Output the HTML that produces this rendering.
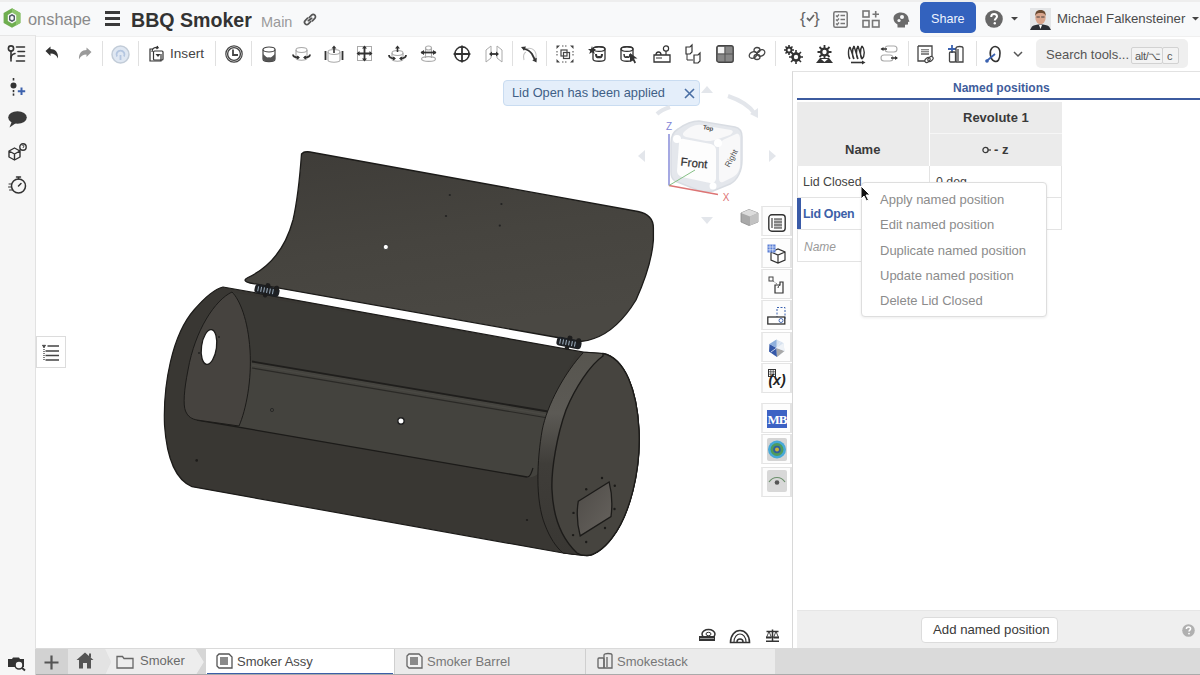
<!DOCTYPE html>
<html><head><meta charset="utf-8">
<style>
*{box-sizing:border-box;margin:0;padding:0}
html,body{width:1200px;height:675px;overflow:hidden;background:#fff;font-family:"Liberation Sans",sans-serif;position:relative}
.a{position:absolute}
.t{position:absolute;white-space:nowrap;line-height:16px}
#top{left:0;top:0;width:1200px;height:37px;background:#f8f9fa;border-bottom:1px solid #f0f0f0}
#side{left:0;top:35px;width:36px;height:640px;background:#f6f6f6;border-right:1px solid #e2e2e2;border-top:1px solid #e6e6e6}
#panel{left:792px;top:71px;width:408px;height:578px;background:#fff;border-left:1px solid #d8d8d8;border-top:1px solid #e2e2e2}
#tabs{left:36px;top:648px;width:1164px;height:27px;background:#dadada}
.sep{position:absolute;top:41px;width:1px;height:25px;background:#e0e0e0}
svg{position:absolute;overflow:visible}
.ic{fill:none;stroke:#333;stroke-width:1.3;stroke-linejoin:round;stroke-linecap:round}
.vb{position:absolute;left:761px;width:31px;height:30px;background:#fdfdfd;border:1px solid #e4e4e4;border-left:2px solid #ebebeb;border-right:2px solid #e3e3e3}
.cm{position:absolute;left:880px;font-size:13px;color:#8c8c8c;white-space:nowrap;line-height:16px}
.cell{position:absolute;border:1px solid #e2e2e2;border-width:0 1px 1px 0}
</style></head><body>
<!-- TOP BAR -->
<div id="top" class="a">
<div class="a" style="left:0;top:0;width:1200px;height:2px;background:#eeeeee"></div>
<svg style="left:3px;top:8px" width="18" height="20" viewBox="0 0 18 20">
<path d="M9 0.3 L17.4 5.1 L17.4 14.9 L9 19.7 L0.6 14.9 L0.6 5.1 Z" fill="#6fae50"/>
<path d="M9 0.3 L17.4 5.1 L17.4 14.9 L13 17.4 L13 7.5 L9 5.2Z" fill="#8cc46c"/>
<path d="M9 4.6 L13.2 7 L13.2 13 L9 15.4 L4.8 13 L4.8 7 Z" fill="#f8f9fa"/>
<path d="M9 6 L12 7.8 L12 12.2 L9 14 L6 12.2 L6 7.8 Z" fill="#505a66"/>
<path d="M9 7.7 L10.6 8.7 L10.6 11.3 L9 12.3 L7.4 11.3 L7.4 8.7 Z" fill="#f8f9fa"/>
</svg>
<div class="t" style="left:28px;top:9px;font-size:16.4px;color:#8a8a8a;line-height:20px">onshape</div>
<div class="a" style="left:105px;top:11px;width:15px;height:3px;background:#3a3a3a"></div>
<div class="a" style="left:105px;top:17px;width:15px;height:3px;background:#3a3a3a"></div>
<div class="a" style="left:105px;top:23px;width:15px;height:3px;background:#3a3a3a"></div>
<div class="t" style="left:131px;top:9px;font-size:19.6px;font-weight:bold;color:#333;line-height:22px">BBQ Smoker</div>
<div class="t" style="left:261px;top:14px;font-size:14.5px;color:#9a9a9a">Main</div>
<svg style="left:303px;top:13px" width="14" height="13" viewBox="0 0 14 13"><g fill="none" stroke="#555" stroke-width="1.7" stroke-linecap="round"><path d="M6.2 4.6 L8.6 2.2 A2.2 2.2 0 0 1 11.8 5.4 L9.4 7.8"/><path d="M7.8 8.4 L5.4 10.8 A2.2 2.2 0 0 1 2.2 7.6 L4.6 5.2"/><path d="M5.3 7.7 L8.7 5.3"/></g></svg>
<!-- right icons -->
<div class="t" style="left:800px;top:9px;font-size:17px;color:#666;line-height:20px;letter-spacing:-1px">{</div>
<div class="t" style="left:814px;top:9px;font-size:17px;color:#666;line-height:20px">}</div>
<svg style="left:806px;top:14px" width="9" height="8"><path d="M1 4 L3.5 6.5 L8 1" fill="none" stroke="#666" stroke-width="1.8"/></svg>
<svg style="left:833px;top:11px" width="15" height="17" viewBox="0 0 15 17"><rect x="0.8" y="0.8" width="13.4" height="15.4" rx="1.5" fill="none" stroke="#777" stroke-width="1.5"/><path d="M3 4.5 L4.2 5.7 L6 3.5 M3 8.5 L4.2 9.7 L6 7.5 M3 12.5 L4.2 13.7 L6 11.5 M7.5 4.5 H12 M7.5 8.5 H12 M7.5 12.5 H12" fill="none" stroke="#777" stroke-width="1.3"/></svg>
<svg style="left:862px;top:10px" width="18" height="18" viewBox="0 0 18 18"><g fill="none" stroke="#777" stroke-width="1.6"><rect x="1" y="1" width="6" height="6"/><rect x="1" y="10.5" width="6" height="6.5"/><rect x="10.5" y="10.5" width="6.5" height="6.5"/><path d="M13.7 1 V7.5 M10.5 4.2 H17"/></g></svg>
<svg style="left:893px;top:12px" width="17" height="16" viewBox="0 0 17 16"><path d="M8 0.5 C12.5 0.5 15.5 3.5 15.5 7.2 L16.5 9.5 L15 10 L15 12.5 L12 12.8 L12 15.5 L4.5 15.5 L4.5 12.5 C2 11 0.5 9 0.5 6.5 C0.5 3 3.5 0.5 8 0.5Z" fill="#6b6b6b"/><circle cx="9" cy="5" r="2" fill="#f7f8f9"/><circle cx="6" cy="8.5" r="1.6" fill="#f7f8f9"/></svg>
<div class="a" style="left:920px;top:2px;width:56px;height:31px;background:#3362be;border-radius:5px"></div>
<div class="t" style="left:931px;top:11px;font-size:12.6px;color:#eef3ff">Share</div>
<svg style="left:985px;top:10px" width="18" height="18" viewBox="0 0 18 18"><circle cx="9" cy="9" r="8.8" fill="#676767"/><path d="M6.2 7 C6.2 4.9 7.6 4 9.1 4 C10.8 4 12 5 12 6.6 C12 8.4 9.8 8.6 9.8 10.4" fill="none" stroke="#fff" stroke-width="2"/><circle cx="9.8" cy="13.3" r="1.2" fill="#fff"/></svg>
<svg style="left:1011px;top:17px" width="8" height="4"><path d="M0 0 H7 L3.5 3.5Z" fill="#444"/></svg>
<svg style="left:1030px;top:8px" width="21" height="22" viewBox="0 0 21 22"><rect width="21" height="22" fill="#e4e6e8"/><path d="M0 22 L2 18.5 C4 17 7 16.5 10.5 16.5 C14 16.5 17 17 19 18.5 L21 22Z" fill="#2b2f36"/><path d="M9 17 L10.5 21 L12 17Z" fill="#fff"/><ellipse cx="10.5" cy="9.5" rx="5.2" ry="6.8" fill="#d9a58c"/><path d="M5.2 8 C5 3.5 7.5 2 10.5 2 C13.5 2 16 3.5 15.8 8 C15 5.5 13 5 10.5 5 C8 5 6 5.5 5.2 8Z" fill="#6a4a32"/><path d="M6.5 9 H9.8 M11.2 9 H14.5" stroke="#333" stroke-width="0.9"/></svg>
<div class="t" style="left:1057px;top:11px;font-size:13.2px;color:#4a4a4a">Michael Falkensteiner</div>
<svg style="left:1192px;top:17px" width="8" height="4"><path d="M0 0 H7 L3.5 3.5Z" fill="#444"/></svg>
</div>

<!-- SIDEBAR -->
<div id="side" class="a"></div>
<svg style="left:7px;top:45px" width="20" height="18" viewBox="0 0 20 18"><g fill="none" stroke="#333" stroke-width="1.6" stroke-linecap="round"><circle cx="4" cy="3.5" r="2.6"/><path d="M4 6.2 V16"/><path d="M4 13 C4 10 6 9 8 8.5"/><path d="M9.5 2 H17.5 M11 6.5 H17.5 M11 11 H17.5 M9.5 16 H17.5"/></g></svg>
<svg style="left:10px;top:78px" width="17" height="18" viewBox="0 0 17 18"><g fill="#333"><rect x="2.7" y="0" width="1.6" height="2.5"/><rect x="2.7" y="12" width="1.6" height="2.2"/><rect x="2.7" y="15.5" width="1.6" height="2.2"/><circle cx="3.5" cy="7.5" r="3"/></g><path d="M11.5 9.5 V17 M7.8 13.2 H15.2" stroke="#3d62ad" stroke-width="2"/></svg>
<svg style="left:8px;top:111px" width="19" height="17" viewBox="0 0 19 17"><ellipse cx="9.5" cy="6.5" rx="9.3" ry="6.2" fill="#3a3a3a"/><path d="M4 10 L1.5 16.5 L8 12Z" fill="#3a3a3a"/></svg>
<svg style="left:8px;top:143px" width="19" height="18" viewBox="0 0 19 18"><g fill="none" stroke="#333" stroke-width="1.4" stroke-linejoin="round"><path d="M1 8 L6.5 5 L12 8 L12 14 L6.5 17 L1 14Z M1 8 L6.5 11 L12 8 M6.5 11 V17"/><circle cx="15" cy="4" r="3.2"/><path d="M12.5 6.5 L10.5 8.5"/></g><path d="M14 2.8 C14 1.8 16 1.8 16 3 C16 4 15 4 15 5" fill="none" stroke="#333" stroke-width="0.9"/></svg>
<svg style="left:8px;top:176px" width="19" height="18" viewBox="0 0 19 18"><g fill="none" stroke="#333" stroke-width="1.5" stroke-linecap="round"><circle cx="10.5" cy="10" r="7"/><path d="M8.5 1 H12.5 M10.5 1 V3 M10.5 10 L13 7.5"/><path d="M1 8 H4 M0.5 11 H3.5 M1.5 14 H4.5" stroke-width="1"/></g></svg>
<div class="a" style="left:36px;top:336px;width:30px;height:32px;background:#fff;border:1px solid #dcdcdc"></div>
<svg style="left:42px;top:344px" width="18" height="18" viewBox="0 0 18 18"><g fill="none" stroke="#444" stroke-width="1.3"><path d="M0.5 1 L2 2.5 L3.5 1" stroke-width="1.6"/><path d="M2 3 V17" stroke-dasharray="1 1"/><path d="M5.5 2 H17 M3.5 7 H17 M3.5 11.5 H17 M3.5 16 H17"/></g></svg>
<svg style="left:8px;top:657px" width="18" height="14" viewBox="0 0 18 14"><path d="M0 2 H4 L5 0.5 H11 L12 2 H16 V10 H0Z" fill="#333"/><circle cx="11" cy="8" r="4" fill="#f5f5f5" stroke="#333" stroke-width="1.6"/><path d="M13.8 10.8 L17 13.5" stroke="#333" stroke-width="2"/></svg>

<!-- TOOLBAR -->
<svg style="left:45px;top:46px" width="14" height="13" viewBox="0 0 14 13"><path d="M0.5 5 L5.5 0.5 L5.5 3 C10 3 13.5 6 13 12.5 C11.5 9 9 7.5 5.5 7.5 L5.5 10 Z" fill="#333"/></svg>
<svg style="left:78px;top:47px" width="14" height="13" viewBox="0 0 14 13"><path d="M13.5 5 L8.5 0.5 L8.5 3 C4 3 0.5 6 1 12.5 C2.5 9 5 7.5 8.5 7.5 L8.5 10 Z" fill="#9a9a9a"/></svg>
<div class="sep" style="left:102px"></div>
<svg style="left:111px;top:45px" width="19" height="19" viewBox="0 0 19 19"><circle cx="9.5" cy="9.5" r="8.5" fill="#dfe7f2" stroke="#c2ccd8" stroke-width="1.5"/><path d="M9.5 15 V10 M6 11.5 A4 4 0 1 1 13 11.5" fill="none" stroke="#b4c6e0" stroke-width="1.8"/></svg>
<div class="sep" style="left:138px"></div>
<svg style="left:149px;top:46px" width="15" height="16" viewBox="0 0 15 16"><g fill="none" stroke="#333" stroke-width="1.2"><path d="M4 3 H1 V15 H12 V8"/><path d="M3 6 C3 2 6 1 9 1.5 L8 0 M9 1.5 L7.5 3"/><rect x="4.5" y="5" width="9.5" height="9" rx="1"/></g><path d="M6.5 8 L11.5 8 L9 11Z" fill="#333"/></svg>
<div class="t" style="left:170px;top:46px;font-size:13.6px;color:#444">Insert</div>
<div class="sep" style="left:215px"></div>
<svg style="left:225px;top:45px" width="18" height="18" viewBox="0 0 18 18"><g fill="none" stroke="#444"><circle cx="9" cy="9" r="8.2" stroke-width="1.2"/><circle cx="9" cy="9" r="6.4" stroke-width="1.4"/><path d="M8 4.5 V10 H13" stroke-width="1.8"/></g></svg>
<div class="sep" style="left:251px"></div>
<!--TB2-->
<svg style="left:259.5px;top:45px" width="19" height="19" viewBox="0 0 19 19"><path d="M3 4.5 V14 C3 17.5 15 17.5 15 14 V4.5" fill="#fff" stroke="#444" stroke-width="1.2"/><path d="M3 9 C5 10 6.5 14 9 12 C11.5 14 13 10 15 9 V14 C15 17.5 3 17.5 3 14Z" fill="#555"/><ellipse cx="9" cy="4.5" rx="6" ry="2.5" fill="#fff" stroke="#444" stroke-width="1.2"/></svg>
<svg style="left:292.2px;top:45px" width="19" height="19" viewBox="0 0 19 19"><ellipse cx="9.5" cy="5" rx="5.5" ry="2.5" fill="none" stroke="#aaa" stroke-width="1.1"/><path d="M4 5 V13 C4 16 15 16 15 13 V5" fill="none" stroke="#aaa" stroke-width="1.1"/><path d="M1 9.5 C1 12 4 12.5 7 12.5 M18 9.5 C18 12 15 12.5 12 12.5" fill="none" stroke="#333" stroke-width="1.8"/><path d="M5 10.5 L8 12.5 L5 14.5Z M14 10.5 L11 12.5 L14 14.5Z" fill="#333"/></svg>
<svg style="left:324.2px;top:45px" width="19" height="19" viewBox="0 0 19 19"><ellipse cx="10" cy="7" rx="6" ry="2.5" fill="none" stroke="#aaa" stroke-width="1.1"/><path d="M4 7 V15 C4 18 16 18 16 15 V7" fill="none" stroke="#aaa" stroke-width="1.1"/><path d="M1.5 6 V15 M18.5 6 V15" stroke="#333" stroke-width="1.8"/><path d="M10 8 V2" stroke="#333" stroke-width="1.6"/><path d="M7.5 3.5 L10 0.5 L12.5 3.5Z" fill="#333"/></svg>
<svg style="left:356.2px;top:45px" width="19" height="19" viewBox="0 0 19 19"><rect x="1.5" y="1.5" width="14" height="14" fill="none" stroke="#aaa" stroke-width="1"/><path d="M8.5 2 V15 M2 8.5 H15" stroke="#333" stroke-width="1.8"/><path d="M6 3.5 L8.5 0.5 L11 3.5Z M6 13.5 L8.5 16.5 L11 13.5Z M3.5 6 L0.5 8.5 L3.5 11Z M13.5 6 L16.5 8.5 L13.5 11Z" fill="#333"/></svg>
<svg style="left:388.0px;top:45px" width="19" height="19" viewBox="0 0 19 19"><ellipse cx="9.5" cy="8" rx="5.5" ry="2.5" fill="none" stroke="#aaa" stroke-width="1.1"/><path d="M4 8 V14 C4 17 15 17 15 14 V8" fill="none" stroke="#aaa" stroke-width="1.1"/><path d="M9.5 7 V2" stroke="#333" stroke-width="1.6"/><path d="M7 3.5 L9.5 0.5 L12 3.5Z" fill="#333"/><path d="M1 10 C1 13 4 13.5 7 13.5 M18 10 C18 13 15 13.5 12 13.5" fill="none" stroke="#333" stroke-width="1.8"/><path d="M5 11.5 L8 13.5 L5 15.5Z M14 11.5 L11 13.5 L14 15.5Z" fill="#333"/></svg>
<svg style="left:420.3px;top:45px" width="19" height="19" viewBox="0 0 19 19"><ellipse cx="8.5" cy="3" rx="3" ry="2" fill="none" stroke="#aaa" stroke-width="1.1"/><path d="M5.5 3 V13 M11.5 3 V13" stroke="#aaa" stroke-width="1.1"/><ellipse cx="8.5" cy="14" rx="7" ry="2.4" fill="none" stroke="#aaa" stroke-width="1.1"/><path d="M1 7.5 H16" stroke="#333" stroke-width="1.8"/><path d="M4 5 L0.5 7.5 L4 10Z M13 5 L16.5 7.5 L13 10Z" fill="#333"/></svg>
<svg style="left:452.5px;top:45px" width="19" height="19" viewBox="0 0 19 19"><circle cx="9" cy="9" r="7.2" fill="none" stroke="#333" stroke-width="1.4"/><path d="M9 1 V17 M1 9 H17" stroke="#333" stroke-width="1.8"/><path d="M6.5 3 L9 0 L11.5 3Z M6.5 15 L9 18 L11.5 15Z M3 6.5 L0 9 L3 11.5Z M15 6.5 L18 9 L15 11.5Z" fill="#333"/></svg>
<svg style="left:484.5px;top:45px" width="19" height="19" viewBox="0 0 19 19"><path d="M1 5 L6 1 V13 L1 17Z M17 5 L12 1 V13 L17 17Z" fill="none" stroke="#aaa" stroke-width="1"/><path d="M5 9 H13" stroke="#333" stroke-width="1.8"/><path d="M7 6.5 L4 9 L7 11.5Z M11 6.5 L14 9 L11 11.5Z" fill="#333"/></svg>
<svg style="left:519.8px;top:45px" width="19" height="19" viewBox="0 0 19 19"><path d="M6 4 C10 2 15 4 16 9 C16.5 12 15 15 13 16" fill="none" stroke="#c4c4c4" stroke-width="1.1"/><path d="M4 15 C3 11 4 8 6 7" fill="none" stroke="#c4c4c4" stroke-width="1.1"/><path d="M3.5 3.5 C7 4.5 10 6 12 9 C13 11 14 13 15 15" fill="none" stroke="#333" stroke-width="1.8"/><path d="M1 2 L6 1.5 L4 5.8Z M16.5 17.5 L12.3 15.2 L16.8 12.8Z" fill="#333"/></svg>
<svg style="left:556.0px;top:45px" width="19" height="19" viewBox="0 0 19 19"><g fill="#444"><path d="M0.5 0.5 H4 L0.5 4Z M17.5 0.5 H14 L17.5 4Z M0.5 17.5 H4 L0.5 14Z M17.5 17.5 H14 L17.5 14Z"/></g><path d="M6 1 H12 M6 17 H12 M1 6 V12 M17 6 V12" stroke="#555" stroke-width="1.1" stroke-dasharray="1.5 1.5"/><rect x="5" y="5" width="6" height="6" fill="#fff" stroke="#444" stroke-width="1.2"/><rect x="7.5" y="7.5" width="6" height="6" fill="none" stroke="#444" stroke-width="1.2"/></svg>
<svg style="left:588.3px;top:45px" width="19" height="19" viewBox="0 0 19 19"><path d="M5 4 C5 1 17 1 17 4 V14 C17 17 5 17 5 14Z" fill="none" stroke="#333" stroke-width="1.3"/><ellipse cx="11" cy="4" rx="6" ry="2.4" fill="none" stroke="#333" stroke-width="1.2"/><path d="M8 9 C8 13 11 13 11 11 C11 13 14 13 14 9" fill="none" stroke="#333" stroke-width="2"/><path d="M4 1 L5 4 L8 4 L5.8 6 L6.8 9 L4 7.2 L1.2 9 L2.2 6 L0 4 L3 4Z" fill="#333"/></svg>
<svg style="left:619.8px;top:45px" width="19" height="19" viewBox="0 0 19 19"><path d="M1 4 C1 1 13 1 13 4 V14 C13 17 1 17 1 14Z" fill="none" stroke="#333" stroke-width="1.3"/><ellipse cx="7" cy="4" rx="6" ry="2.4" fill="none" stroke="#333" stroke-width="1.2"/><path d="M4 9 C4 13 7 13 7 11 C7 13 10 13 10 9" fill="none" stroke="#333" stroke-width="1.5"/><path d="M10 8 L10 17 L12.5 14.5 L14.5 18.5 L16 17.5 L14 13.5 L17.5 13.5Z" fill="#333"/></svg>
<svg style="left:652.5px;top:45px" width="19" height="19" viewBox="0 0 19 19"><circle cx="13" cy="3.5" r="2.6" fill="none" stroke="#333" stroke-width="1.2"/><path d="M13 6 V10" stroke="#333" stroke-width="1.2"/><path d="M1 10 H17 V17 H1Z" fill="none" stroke="#333" stroke-width="1.3"/><path d="M3 10 C3 6 8 6 8 10" fill="none" stroke="#333" stroke-width="1.3"/><path d="M3 13 H9" stroke="#333" stroke-width="1"/></svg>
<svg style="left:684.2px;top:45px" width="19" height="19" viewBox="0 0 19 19"><path d="M2 2 H6 L8 0 V7 L6 9 H2Z" fill="none" stroke="#333" stroke-width="1.2"/><path d="M10 10 H14 L16 8 V16 L14 18 H10Z" fill="none" stroke="#333" stroke-width="1.2"/><path d="M3 9 V15 H9" fill="none" stroke="#333" stroke-width="1"/></svg>
<svg style="left:716.0px;top:45px" width="19" height="19" viewBox="0 0 19 19"><rect x="0.8" y="0.8" width="16.4" height="16.4" rx="2" fill="#888" stroke="#444" stroke-width="1.4"/><rect x="2" y="2" width="6.5" height="6.5" fill="#f3f3f3"/><path d="M9 1 V17 M1 9 H17" stroke="#555" stroke-width="1"/></svg>
<svg style="left:748.3px;top:45px" width="19" height="19" viewBox="0 0 19 19"><g fill="none" stroke="#444" stroke-width="1.3"><ellipse cx="5" cy="10" rx="4" ry="3" transform="rotate(-30 5 10)"/><ellipse cx="13" cy="8" rx="4" ry="3" transform="rotate(-30 13 8)"/><ellipse cx="9" cy="5" rx="3" ry="2.5"/><ellipse cx="9" cy="12" rx="3" ry="2.5"/></g></svg>
<svg style="left:784.2px;top:45px" width="19" height="19" viewBox="0 0 19 19"><g fill="#333"><circle cx="5" cy="5" r="3.4"/><circle cx="12" cy="12" r="4.8"/></g><g stroke="#333" stroke-width="1.6"><path d="M5 0 V10 M0 5 H10 M1.5 1.5 L8.5 8.5 M8.5 1.5 L1.5 8.5"/><path d="M12 5 V19 M5 12 H19 M7 7 L17 17 M17 7 L7 17"/></g><circle cx="5" cy="5" r="1.5" fill="#fff"/><circle cx="12" cy="12" r="2.2" fill="#fff"/></svg>
<svg style="left:815.9px;top:45px" width="19" height="19" viewBox="0 0 19 19"><circle cx="8.5" cy="7" r="4.5" fill="#333"/><g stroke="#333" stroke-width="1.8"><path d="M8.5 0 V14 M1.5 7 H15.5 M3.5 2 L13.5 12 M13.5 2 L3.5 12"/></g><circle cx="8.5" cy="7" r="2.2" fill="#fff"/><path d="M0 18 L4 13 H13 L17 18Z" fill="#333"/><path d="M5 14 L8.5 17 L12 14" fill="#fff"/></svg>
<svg style="left:848.3px;top:45px" width="19" height="19" viewBox="0 0 19 19"><g fill="none" stroke="#333" stroke-width="1.4"><path d="M2 2 C0 4 0 12 2 14 M6 1 C4 4 4 12 6 14 M10 1 C8 4 8 12 10 14 M14 1 C12 4 12 12 14 14 M2 2 L6 14 M6 1 L10 14 M10 1 L14 14 M14 1 C17 4 17 11 14 14"/></g><path d="M3 17.5 H15" stroke="#333" stroke-width="1.6"/><path d="M14 15.5 L17.5 17.5 L14 19.5Z" fill="#333"/></svg>
<svg style="left:880.0px;top:45px" width="19" height="19" viewBox="0 0 19 19"><rect x="5" y="1" width="12" height="6" rx="3" fill="none" stroke="#aaa" stroke-width="1.1"/><rect x="1" y="10" width="12" height="6" rx="3" fill="none" stroke="#aaa" stroke-width="1.1"/><path d="M1.5 4 H7 M11 13 H17" stroke="#333" stroke-width="1.6"/><path d="M3.5 2 L0.5 4 L3.5 6Z M15 11 L18 13 L15 15Z" fill="#333"/></svg>
<svg style="left:916.9px;top:45px" width="19" height="19" viewBox="0 0 19 19"><path d="M1 1 H15 V11 M1 1 V16 H8" fill="none" stroke="#444" stroke-width="1.3"/><rect x="4" y="4" width="8" height="6" fill="#888"/><path d="M4 5.5 H12 M4 7.5 H12" stroke="#fff" stroke-width="0.6"/><g fill="none" stroke="#444" stroke-width="1.1"><ellipse cx="10.5" cy="15" rx="3" ry="2" transform="rotate(-40 10.5 15)"/><ellipse cx="13.5" cy="14" rx="3" ry="2" transform="rotate(-40 13.5 14)"/></g></svg>
<svg style="left:947.7px;top:45px" width="19" height="19" viewBox="0 0 19 19"><path d="M4 0 V8 M0 4 H8" stroke="#3b62b0" stroke-width="1.8"/><g fill="none" stroke="#444" stroke-width="1.3"><rect x="1.5" y="7" width="6" height="10" rx="1"/><path d="M8 17 V3 C8 1 15 1 15 3 V17Z"/><path d="M10 4 V16"/></g></svg>
<svg style="left:984.5px;top:45px" width="19" height="19" viewBox="0 0 19 19"><path d="M15 8 C15 2 10 0 7 3 C4 6 5 14 9 16 C13 18 15 14 15 8Z" fill="none" stroke="#333" stroke-width="1.6"/><path d="M1 16.5 L10 9" stroke="#3b62b0" stroke-width="1.8"/><circle cx="2" cy="16" r="1.8" fill="#3b62b0"/></svg>
<div class="sep" style="left:512px"></div>
<div class="sep" style="left:546px"></div>
<div class="sep" style="left:775px"></div>
<div class="sep" style="left:908px"></div>
<div class="sep" style="left:976px"></div>
<svg style="left:1013px;top:51px" width="10" height="6"><path d="M1 1 L5 5 L9 1" fill="none" stroke="#555" stroke-width="1.5"/></svg>
<div class="a" style="left:1036px;top:39px;width:152px;height:29px;background:#efefef;border-radius:5px"></div>
<div class="t" style="left:1046px;top:47px;font-size:13px;color:#555">Search tools...</div>
<div class="a" style="left:1131px;top:47px;width:32px;height:17px;border:1px solid #d2d2d2;border-radius:2px;background:#f3f3f3"></div>
<div class="a" style="left:1162px;top:47px;width:17px;height:17px;border:1px solid #d2d2d2;border-radius:2px;background:#f3f3f3"></div>
<div class="t" style="left:1135px;top:48px;font-size:11px;color:#555;letter-spacing:-0.3px">alt/&#8997;</div>
<div class="t" style="left:1167px;top:48px;font-size:11px;color:#555">c</div>
<!--/TB2-->
<!-- MODEL -->
<svg style="left:0;top:0" width="1200" height="675" viewBox="0 0 1200 675">
<defs>
<linearGradient id="lidg" x1="0" y1="0" x2="0.3" y2="1"><stop offset="0" stop-color="#3e3c38"/><stop offset="0.55" stop-color="#46443f"/><stop offset="1" stop-color="#4a4843"/></linearGradient>
<linearGradient id="rimg" x1="0" y1="0" x2="0" y2="1"><stop offset="0" stop-color="#57554f"/><stop offset="0.3" stop-color="#5c5a55"/><stop offset="0.55" stop-color="#3f3d39"/><stop offset="1" stop-color="#393733"/></linearGradient>
<linearGradient id="ventg" x1="0" y1="0" x2="1" y2="1"><stop offset="0" stop-color="#4e4b47"/><stop offset="1" stop-color="#67635e"/></linearGradient>
</defs>
<!-- barrel exterior -->
<path d="M223 287 L583.7 352.2 L603 353.5 C625 358 637 390 639 430 C641 470 630 515 612 538 C603 550 593 556 586 555.5 C578 555 570 554 563 553 L192 486.7 C178 481 167 462 164.5 425 C163 385 172 335 194 310 C206 296 215 289 223 287Z" fill="#393733" stroke="#1c1b19" stroke-width="1.2"/>
<!-- interior back wall -->
<path d="M232 292 L578 352 C566 370 552 400 545 440 L540 470 C538 476 532 478 527 477 L197 420 C190 418 186 414 185.5 411 C184 380 192 335 205 318 C215 303 225 294 232 292Z" fill="#3a3935"/>
<!-- interior floor -->
<path d="M250 362 L547 412 L540 470 C538 476 532 478 527 477 L238 427 Z" fill="#44433e"/>
<!-- groove -->
<path d="M252 361.5 L548 411.5" stroke="#1f1e1c" stroke-width="1.8" fill="none"/>
<path d="M252 368 L548 418" stroke="#2a2926" stroke-width="1.2" fill="none"/>
<path d="M252 365 L548 415" stroke="#4a4944" stroke-width="1.4" fill="none"/>
<!-- lip -->
<path d="M197 420 L527 477" stroke="#1c1b19" stroke-width="1.3" fill="none"/>
<path d="M533 468 C531 474 530 477 527 477" stroke="#1c1b19" stroke-width="1.2" fill="none"/>
<!-- left inner cap face -->
<path d="M232 292 C215 300 195 330 188 370 C184 390 183 405 185.5 411 C188 417 192 419 197 420 L239 426 C246 410 252 380 250 350 C248 320 240 300 232 292Z" fill="#46433f" stroke="#1c1b19" stroke-width="1"/>
<ellipse cx="209" cy="347" rx="7.5" ry="17.5" transform="rotate(8 209 347)" fill="#fff" stroke="#1c1b19" stroke-width="1.3"/>
<circle cx="219" cy="337" r="1" fill="#222"/><circle cx="199" cy="353" r="1" fill="#222"/>
<!-- right cap rim -->
<path d="M583.7 352.2 C565 372 547 405 542.2 430 C537 460 535 500 545 525 C550 538 556 547 563 553 C570 554 578 555 586 555.5 C593 556 603 550 612 538 C630 515 641 470 639 430 C637 390 625 358 603 353.5 Z" fill="url(#rimg)" stroke="#1c1b19" stroke-width="1"/>
<!-- right cap face -->
<path d="M603 353.5 C625 358 637 390 639 430 C641 470 630 515 612 538 C603 550 593 556 586 555.5 C582 555.5 579 554.5 577 553 C560 537 553 515 552 490 C551 470 557 435 566 410 C575 388 590 365 603 356Z" fill="#46443f" stroke="#1c1b19" stroke-width="1.4"/>
<!-- vent -->
<path d="M578.3 501.2 L609.1 481.9 C612 493 612.5 505 611 516.6 L580.2 535.9 C577 524 576.5 512 578.3 501.2Z" fill="url(#ventg)" stroke="#1c1b19" stroke-width="1.3"/>
<g fill="#1c1b19"><circle cx="602" cy="478" r="1.2"/><circle cx="614.8" cy="485.7" r="1.2"/><circle cx="614.5" cy="509" r="1.2"/><circle cx="605" cy="528" r="1.2"/><circle cx="586.2" cy="542" r="1.2"/><circle cx="573.1" cy="535.1" r="1.2"/><circle cx="573.5" cy="512.9" r="1.2"/><circle cx="586.2" cy="489.3" r="1.2"/>
<circle cx="196.7" cy="460.4" r="1.3"/><circle cx="527" cy="520" r="1.1"/><circle cx="272" cy="410" r="1.6" fill="none" stroke="#222" stroke-width="0.8"/></g>
<circle cx="401" cy="421" r="3.2" fill="#fff" stroke="#222" stroke-width="1.4"/>
<!-- lid -->
<path d="M301.5 154 C304 151 307 151.5 310 152 L638 211.5 C648 213.5 653.4 218 653.4 228 L653.4 240 C652 260 645 280 636 300 C625 318 610 333 594 338.5 C589 340.5 585 341.5 580 341.5 L250 283 C245 282 243 280 248 277.5 C268 268 285 250 293 220 C298 198 300 175 301.5 154Z" fill="url(#lidg)" stroke="#1c1b19" stroke-width="1.3"/>
<circle cx="385.8" cy="247" r="2.6" fill="#fff" stroke="#222" stroke-width="0.8"/>
<g fill="#222"><circle cx="449.8" cy="195" r="1.1"/><circle cx="501.4" cy="204" r="1.1"/><circle cx="446" cy="216" r="1.1"/><circle cx="499.8" cy="225.6" r="1.1"/></g>
<!-- hinges -->
<g transform="translate(267 290.5) rotate(11)"><rect x="-12.5" y="-4.5" width="25" height="9" rx="3" fill="#1d2024"/><path d="M-9 -2.5 V2.5 M-6 -2.5 V2.5 M-3 -2.5 V2.5 M0 -2.5 V2.5 M3 -2.5 V2.5 M6 -2.5 V2.5" stroke="#93a3b2" stroke-width="1.1"/><circle cx="0" cy="-5" r="2.5" fill="#1d1d1d"/><circle cx="9" cy="-4" r="2.5" fill="#1d1d1d"/><circle cx="-1" cy="5" r="2.2" fill="#1d1d1d"/></g>
<g transform="translate(569 343) rotate(11)"><rect x="-12.5" y="-4.5" width="25" height="9" rx="3" fill="#1d2024"/><path d="M-9 -2.5 V2.5 M-6 -2.5 V2.5 M-3 -2.5 V2.5 M0 -2.5 V2.5 M3 -2.5 V2.5 M6 -2.5 V2.5" stroke="#93a3b2" stroke-width="1.1"/><circle cx="0" cy="-5" r="2.5" fill="#1d1d1d"/><circle cx="9" cy="-4" r="2.5" fill="#1d1d1d"/><circle cx="-1" cy="5" r="2.2" fill="#1d1d1d"/></g>
</svg>

<!-- VIEW OVERLAYS -->
<div class="a" style="left:503px;top:80px;width:197px;height:26px;background:#e4eefa;border:1px solid #c9dcf1;border-radius:4px"></div>
<div class="t" style="left:512px;top:85px;font-size:12.8px;color:#3f5f86">Lid Open has been applied</div>
<svg style="left:684px;top:88px" width="11" height="11"><path d="M1 1 L10 10 M10 1 L1 10" stroke="#4a6fa5" stroke-width="1.6"/></svg>
<svg style="left:0;top:0" width="1200" height="675" viewBox="0 0 1200 675">
<g fill="#e3e6eb"><path d="M701 93 L707 86 L713 93Z"/><path d="M645 150 L638 156 L645 162Z"/><path d="M769 150 L776 156 L769 162Z"/><path d="M701 217 L707 224 L713 217Z"/></g>
<path d="M728 96 C740 100 750 106 755 114" fill="none" stroke="#e3e6eb" stroke-width="4"/>
<path d="M750 114 L758 118 L758 108Z" fill="#e3e6eb"/>
<path d="M670 107 C664 109 660 111 657 114" fill="none" stroke="#e3e6eb" stroke-width="4"/>
<!-- cube -->
<path d="M678 129 C685 124 692 121 699 121 L735 127 C740 128 742 132 742 137 L742 160 C742 170 738 180 730 184 L713 191 C708 192 704 192 700 191 L675 181 C672 179 671 176 671 172 L671 143 C671 137 673 132 678 129Z" fill="#e4e7ec" stroke="#d9dde3" stroke-width="1.5"/>
<path d="M679 143 C679 140 681 138 684 139 L711 144 C714 145 716 147 716 150 L716 178 C716 182 713 184 710 183 L682 177 C679 176 677 174 677 171Z" fill="#fdfdfd"/>
<path d="M719 147 C719 144 722 140 725 139 L736 134 C739 133 740 136 740 139 L740 165 C740 170 737 175 733 177 L723 182 C720 183 719 181 719 178Z" fill="#f8f8f9"/>
<path d="M684 132 C689 127 696 124 701 125 L731 130 C734 131 733 133 730 135 L715 140 C712 141 709 141 706 141 L686 137 C683 136 682 134 684 132Z" fill="#f8f8f9"/>
<circle cx="677" cy="139" r="4" fill="#fff"/><circle cx="718" cy="143" r="4" fill="#fff"/><circle cx="713" cy="186" r="3.5" fill="#fff"/>
<text x="694" y="167" font-family="Liberation Sans" font-size="11.5" fill="#333" stroke="#333" stroke-width="0.25" text-anchor="middle" transform="rotate(6 694 164)">Front</text>
<text x="731" y="161" font-family="Liberation Sans" font-size="8" fill="#555" text-anchor="middle" transform="rotate(-62 731 158)">Right</text>
<text x="708" y="130" font-family="Liberation Sans" font-size="6" font-weight="bold" fill="#444" text-anchor="middle" transform="rotate(12 708 129)">Top</text>
<!-- axes -->
<path d="M669 185.5 V134" stroke="#7f84d6" stroke-width="1.4"/>
<path d="M669 185.5 L718 194.5" stroke="#dd7474" stroke-width="1.4"/>
<path d="M669 185.5 L695 170" stroke="#86c086" stroke-width="1"/>
<text x="669" y="130" font-family="Liberation Sans" font-size="10" fill="#7f84d6" text-anchor="middle">Z</text>
<text x="726" y="201" font-family="Liberation Sans" font-size="10" fill="#dd7474" text-anchor="middle">X</text>
<!-- small 3d cube -->
<path d="M741 213 L749 209.5 L758 213 L758 222 L749 225.5 L741 222Z" fill="#a9a9a9" stroke="#8c8c8c" stroke-width="0.8"/>
<path d="M741 213 L749 209.5 L758 213 L750 216.5Z" fill="#dcdcdc"/>
<path d="M750 216.5 L758 213 L758 222 L750 225.5Z" fill="#c2c2c2"/>
<!-- measure icons -->
<g transform="translate(698.5 629.5)"><ellipse cx="10" cy="4.5" rx="6.5" ry="4.5" fill="none" stroke="#333" stroke-width="1.5"/><ellipse cx="10" cy="4.5" rx="2.5" ry="1.7" fill="none" stroke="#333" stroke-width="1"/><rect x="0.5" y="6.5" width="16" height="5" fill="#333"/><path d="M2 9 H15" stroke="#fff" stroke-width="1" stroke-dasharray="1 1"/></g>
<g transform="translate(730 630)"><path d="M0.5 12.5 C0.5 5 5 0.5 10 0.5 C15 0.5 19.5 5 19.5 12.5Z" fill="none" stroke="#333" stroke-width="1.6"/><path d="M4 12 C4 7 7 4 10 4 C13 4 16 7 16 12" fill="none" stroke="#333" stroke-width="1.1"/><path d="M7 12 C7 10 8.5 9 10 9 C11.5 9 13 10 13 12" fill="none" stroke="#333" stroke-width="1.5"/></g>
<g transform="translate(765.5 628.5)"><path d="M1 3 H13 M7 1 V12 M0.5 12.8 H13.5" stroke="#333" stroke-width="1.5"/><path d="M3.5 3 L1 9 H6Z M10.5 3 L8 9 H13Z" fill="none" stroke="#333" stroke-width="0.9"/><path d="M0.5 9 H6 M8 9 H13.5" stroke="#333" stroke-width="1.8"/></g>
</svg>
<!-- right vertical toolbar -->
<div class="vb" style="top:206px"></div>
<div class="vb" style="top:238px"></div>
<div class="vb" style="top:269px"></div>
<div class="vb" style="top:300px"></div>
<div class="vb" style="top:332px"></div>
<div class="vb" style="top:363px"></div>
<div class="vb" style="top:403px"></div>
<div class="vb" style="top:434px"></div>
<div class="vb" style="top:467px"></div>
<svg style="left:0;top:0" width="1200" height="675" viewBox="0 0 1200 675">
<g transform="translate(768 214)"><rect x="0.8" y="0.8" width="16.4" height="16.4" rx="3" fill="none" stroke="#333" stroke-width="1.4"/><path d="M4 4 V14 M6 5 H14 M6 8 H14 M6 11 H14 M6 14 H14" stroke="#333" stroke-width="1.1"/><rect x="6" y="5" width="8" height="9" fill="#666" opacity="0.4"/></g>
<g transform="translate(767 244)"><path d="M4 8 L11 5 L18 8 L18 16 L11 19 L4 16Z M4 8 L11 11 L18 8 M11 11 V19" fill="#fff" stroke="#333" stroke-width="1.2"/><rect x="0.5" y="0.5" width="8" height="8" fill="#5a7fd6"/><path d="M3 0.5 V8.5 M5.8 0.5 V8.5 M0.5 3 H8.5 M0.5 5.8 H8.5" stroke="#fff" stroke-width="0.6"/></g>
<g transform="translate(768 276)"><rect x="1" y="1" width="4" height="4" fill="none" stroke="#444" stroke-width="1"/><path d="M5 5 L9 8" stroke="#444" stroke-width="0.8" stroke-dasharray="1 1"/><path d="M7 9 H12 V6 L15 6 V17 H7Z" fill="none" stroke="#333" stroke-width="1.2"/><path d="M10 12 C10 10 12 9 12 9" fill="none" stroke="#333" stroke-width="1"/></g>
<g transform="translate(767 307)"><rect x="10" y="0.5" width="8" height="13" fill="none" stroke="#3b62b0" stroke-width="1" stroke-dasharray="2 1.5"/><rect x="0.8" y="10" width="17" height="7" fill="#fff" stroke="#333" stroke-width="1.3"/><circle cx="14" cy="13.5" r="2" fill="none" stroke="#3b62b0" stroke-width="0.9"/></g>
<g transform="translate(768 339)"><path d="M8.5 0.5 L15.5 4 L16.5 12 L9 18 L1 12.5 L1.5 5Z" fill="#d7e2ef"/><path d="M1.5 5 L8.5 9 L9 18 L1 12.5Z" fill="#3558a8"/><path d="M8.5 0.5 L8.5 9 L1.5 5Z" fill="#8fb0dd"/><path d="M8.5 9 L16.5 12 L9 18Z" fill="#a9a9a9"/><path d="M8.5 9 L15.5 4 L16.5 12Z" fill="#eef2f7"/><path d="M3 13 L8.5 9 L13 2" stroke="#e8eef8" stroke-width="0.8" fill="none"/></g>
<g transform="translate(766 368)"><rect x="2.5" y="1.5" width="7" height="7" fill="#fff" stroke="#333" stroke-width="1"/><path d="M2.5 3.8 H9.5 M2.5 6.2 H9.5 M4.8 1.5 V8.5 M7.2 1.5 V8.5" stroke="#333" stroke-width="0.7"/><text x="11" y="17" font-family="Liberation Sans" font-size="14" font-weight="bold" font-style="italic" fill="#222" text-anchor="middle">(x)</text></g>
<g transform="translate(767 410)"><rect x="0" y="0" width="20" height="18" fill="#3d62c4"/><text x="10" y="14" font-family="Liberation Serif" font-size="13" font-weight="bold" fill="#fff" text-anchor="middle" letter-spacing="-1">MB</text></g>
<g transform="translate(767 438)"><rect x="0" y="0" width="20" height="23" rx="2" fill="#d4d4d4"/><circle cx="10" cy="11.5" r="9" fill="#47a9d8"/><circle cx="10" cy="11.5" r="6.5" fill="#4e9a5c"/><circle cx="10" cy="11.5" r="3.8" fill="#2e5f9e"/><circle cx="10" cy="11.5" r="2" fill="#c9b33a"/></g>
<g transform="translate(767 470)"><rect x="0" y="0" width="20" height="22" rx="2" fill="#d8d8d8"/><path d="M2 12 C6 6 14 6 18 12" fill="none" stroke="#6b8f6b" stroke-width="1.2"/><circle cx="10" cy="12.5" r="2.3" fill="#555"/></g>
</svg>

<!-- PANEL -->
<div id="panel" class="a"></div>
<div class="t" style="left:953px;top:80px;font-size:12px;font-weight:bold;color:#3f5d9c">Named positions</div>
<div class="a" style="left:797px;top:98px;width:403px;height:2px;background:#3c5b9f"></div>
<div class="a" style="left:797px;top:102px;width:265px;height:64px;background:#ebebeb"></div>
<div class="a" style="left:929px;top:102px;width:1px;height:64px;background:#fff"></div>
<div class="a" style="left:930px;top:133px;width:132px;height:1px;background:#f6f6f6"></div>
<div class="t" style="left:845px;top:142px;font-size:13px;font-weight:bold;color:#3a3a3a">Name</div>
<div class="t" style="left:963px;top:110px;font-size:13px;font-weight:bold;color:#3a3a3a">Revolute 1</div>
<svg style="left:982px;top:146px" width="10" height="8"><circle cx="3.5" cy="4" r="2.6" fill="none" stroke="#3a3a3a" stroke-width="1.3"/><path d="M6 4 H9" stroke="#3a3a3a" stroke-width="1.3"/></svg>
<div class="t" style="left:994px;top:142px;font-size:13px;font-weight:bold;color:#3a3a3a">- z</div>
<!-- rows -->
<div class="a" style="left:797px;top:166px;width:265px;height:64px;border-left:1px solid #e3e3e3;border-right:1px solid #e3e3e3"></div>
<div class="a" style="left:797px;top:197px;width:265px;height:1px;background:#e3e3e3"></div>
<div class="a" style="left:797px;top:229px;width:265px;height:1px;background:#e3e3e3"></div>
<div class="a" style="left:929px;top:166px;width:1px;height:64px;background:#e3e3e3"></div>
<div class="a" style="left:797px;top:230px;width:1px;height:32px;background:#e3e3e3"></div>
<div class="a" style="left:797px;top:261px;width:70px;height:1px;background:#e3e3e3"></div>
<div class="a" style="left:797px;top:198px;width:4px;height:31px;background:#3a5ba8"></div>
<div class="t" style="left:803px;top:174px;font-size:12.4px;color:#444">Lid Closed</div>
<div class="t" style="left:936px;top:174px;font-size:12.4px;color:#444">0 deg</div>
<div class="t" style="left:803px;top:206px;font-size:12.4px;font-weight:bold;color:#3d5fa8;letter-spacing:-0.3px">Lid Open</div>
<div class="t" style="left:804px;top:239px;font-size:12px;font-style:italic;color:#9a9a9a">Name</div>
<!-- context menu -->
<div class="a" style="left:861px;top:182px;width:186px;height:135px;background:#fff;border:1px solid #dedede;border-radius:4px;box-shadow:0 1px 3px rgba(0,0,0,0.08)"></div>
<div class="cm" style="top:192px">Apply named position</div>
<div class="cm" style="top:217px">Edit named position</div>
<div class="cm" style="top:243px">Duplicate named position</div>
<div class="cm" style="top:268px">Update named position</div>
<div class="cm" style="top:293px">Delete Lid Closed</div>
<svg style="left:860px;top:185px" width="12" height="17" viewBox="0 0 12 17"><path d="M1 1 V14 L4 11 L6.5 16 L8.5 15 L6 10 L10 10Z" fill="#111" stroke="#fff" stroke-width="1"/></svg>
<!-- footer -->
<div class="a" style="left:797px;top:610px;width:403px;height:38px;background:#efefef;border-top:1px solid #e6e6e6"></div>
<div class="a" style="left:921px;top:617px;width:137px;height:26px;background:#fff;border:1px solid #dcdcdc;border-radius:4px"></div>
<div class="t" style="left:933px;top:622px;font-size:13.2px;color:#3a3a3a">Add named position</div>
<svg style="left:1182px;top:624px" width="13" height="13" viewBox="0 0 13 13"><circle cx="6.5" cy="6.5" r="6.3" fill="#b0b0b0"/><path d="M4.4 5 C4.4 3.6 5.4 3 6.5 3 C7.7 3 8.6 3.7 8.6 4.8 C8.6 6.1 7 6.2 7 7.5" fill="none" stroke="#fff" stroke-width="1.5"/><circle cx="7" cy="9.6" r="0.9" fill="#fff"/></svg>
<!-- TABS -->
<div id="tabs" class="a"></div>
<div class="a" style="left:35px;top:649px;width:33px;height:26px;background:#d2d2d2"></div>
<svg style="left:44px;top:655px" width="15" height="15"><path d="M7.5 0.5 V14.5 M0.5 7.5 H14.5" stroke="#555" stroke-width="2.2"/></svg>
<svg style="left:68px;top:649px" width="140" height="26" viewBox="0 0 140 26"><path d="M0 0 H37 L43 13 L37 26 H0Z" fill="#e3e3e3"/><path d="M37 0 H128 L136 13 L128 26 H37 L43 13Z" fill="#ededed"/><path d="M128 0 H138 V26 H128 L136 13Z" fill="#d6d6d6"/></svg>
<svg style="left:76px;top:652px" width="18" height="17" viewBox="0 0 18 17"><path d="M9 0.5 L17.5 8 H15 V16.5 H11 V11 H7 V16.5 H3 V8 H0.5Z" fill="#555"/><rect x="13" y="1.5" width="2" height="4" fill="#555"/></svg>
<svg style="left:116px;top:655px" width="18" height="14" viewBox="0 0 18 14"><path d="M1 1.5 H6.5 L8 3.5 H17 V13 H1Z" fill="none" stroke="#666" stroke-width="1.3"/></svg>
<div class="t" style="left:140px;top:653px;font-size:13px;color:#6a6a6a">Smoker</div>
<div class="a" style="left:206px;top:649px;width:188px;height:26px;background:#fff"></div>
<div class="a" style="left:207px;top:673px;width:186px;height:2px;background:#3c5fa8"></div>
<svg style="left:216px;top:653px" width="17" height="16" viewBox="0 0 17 16"><path d="M1 3 L3 1 H13 L16 4 V15 H3 L1 13Z" fill="#fff" stroke="#555" stroke-width="1.3"/><rect x="4" y="4" width="8" height="8" fill="#8a8a8a"/></svg>
<div class="t" style="left:237px;top:654px;font-size:13px;color:#4a4a4a">Smoker Assy</div>
<div class="a" style="left:394px;top:649px;width:191px;height:26px;background:#ebebeb;border-left:1px solid #cfcfcf"></div>
<svg style="left:406px;top:653px" width="17" height="16" viewBox="0 0 17 16"><path d="M1 3 L3 1 H13 L16 4 V15 H3 L1 13Z" fill="#f2f2f2" stroke="#666" stroke-width="1.3"/><rect x="4" y="4" width="8" height="8" fill="#8a8a8a"/></svg>
<div class="t" style="left:427px;top:654px;font-size:13px;color:#777">Smoker Barrel</div>
<div class="a" style="left:585px;top:649px;width:190px;height:26px;background:#ebebeb;border-left:1px solid #cfcfcf"></div>
<svg style="left:597px;top:652px" width="16" height="17" viewBox="0 0 16 17"><g fill="none" stroke="#666" stroke-width="1.3"><rect x="1" y="6" width="6" height="10" rx="1"/><path d="M7 16 V3 C7 1 15 1 15 3 V16Z M10 5 V15"/></g></svg>
<div class="t" style="left:617px;top:654px;font-size:13px;color:#777">Smokestack</div>
<div class="a" style="left:36px;top:674px;width:1164px;height:1px;background:#aaa"></div>

</body></html>
